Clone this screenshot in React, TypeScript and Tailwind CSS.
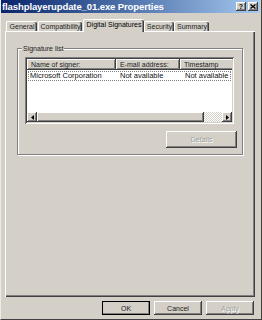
import type { ReactNode } from "react";

const raised =
  "bg-[#d4d0c8] shadow-[inset_-1px_-1px_#404040,inset_1px_1px_#ffffff,inset_-2px_-2px_#808080]";

interface TabProps {
  label: string;
  width: string;
  active?: boolean;
}

function Tab({ label, width, active = false }: TabProps) {
  if (active) {
    return (
      <div
        className={`${width} relative z-10 -mb-[1px] ml-[1px] flex h-[13px] items-start justify-center rounded-t-[2px] border-l border-t border-white bg-[#d4d0c8] pt-[1px] shadow-[inset_-1px_0_#404040,inset_-2px_0_#808080] text-black`}
      >
        {label}
      </div>
    );
  }
  return (
    <div
      className={`${width} flex h-[10px] items-center justify-center rounded-t-[2px] border-l border-t border-white bg-[#d4d0c8] shadow-[inset_-1px_0_#404040,inset_-2px_0_#808080] text-[#222]`}
    >
      {label}
    </div>
  );
}

function HeaderCell({ width, children }: { width: string; children: ReactNode }) {
  return (
    <div className={`${width} ${raised} flex h-[11px] shrink-0 items-center pl-[4px]`}>
      {children}
    </div>
  );
}

function Button({
  children,
  disabled = false,
  isDefault = false,
  className = "",
}: {
  children: ReactNode;
  disabled?: boolean;
  isDefault?: boolean;
  className?: string;
}) {
  return (
    <button
      className={`${className} ${raised} flex items-center justify-center ${
        isDefault ? "outline outline-1 -outline-offset-1 outline-black" : ""
      } ${disabled ? "text-[#a0a0a0] [text-shadow:1px_1px_#ffffff]" : "text-[#222]"}`}
    >
      {children}
    </button>
  );
}

export default function App() {
  return (
    <div className="h-[320px] w-[262px] overflow-hidden bg-[#d4d0c8] font-['Liberation_Sans',Arial,sans-serif] text-[7px] leading-none">
      <div className="flex h-[320px] w-[262px] flex-col border-b border-l border-r border-b-[#404040] border-l-[#ececec] border-r-[#404040]">
        {/* Title bar */}
        <div className="mr-[1px] flex h-[13px] items-center justify-between bg-gradient-to-r from-[#0a246a] to-[#a6caf0] pl-[1px] pr-[2px]">
          <span className="text-[9.5px] font-bold tracking-[-0.1px] text-white">
            flashplayerupdate_01.exe Properties
          </span>
          <div className="flex gap-[2px]">
            <div className={`${raised} flex h-[9px] w-[10px] items-center justify-center text-[7px] font-bold text-black`}>
              ?
            </div>
            <div className={`${raised} flex h-[9px] w-[10px] items-center justify-center`}>
              <svg width="6" height="5" viewBox="0 0 6 5">
                <path d="M0.5 0.5 L5.5 4.5 M5.5 0.5 L0.5 4.5" stroke="#000" strokeWidth="1.3" />
              </svg>
            </div>
          </div>
        </div>

        <div className="pl-[4px]">
          {/* Tabs */}
          <div className="mt-[6px] flex items-end pl-[1px]">
            <Tab label="General" width="w-[31px]" />
            <div className="ml-[1px]">
              <Tab label="Compatibility" width="w-[44px]" />
            </div>
            <Tab label="Digital Signatures" width="w-[61px]" active />
            <Tab label="Security" width="w-[30px]" />
            <Tab label="Summary" width="w-[35px]" />
          </div>

          {/* Tab panel */}
          <div className="h-[266px] w-[250px] border-l border-t border-white pl-[11px] pt-[16px] shadow-[inset_-1px_-1px_#404040,inset_-2px_-2px_#808080]">
            {/* Group box */}
            <div className="relative h-[107px] w-[226px] border border-[#808080] pl-[7px] pt-[8px] shadow-[1px_1px_#ffffff,inset_1px_1px_#ffffff]">
              <span className="absolute -top-[4px] left-[4px] bg-[#d4d0c8] px-[1px] text-[#222]">
                Signature list
              </span>

              {/* List view */}
              <div className="flex h-[67px] w-[209px] flex-col bg-white p-[2px] shadow-[inset_1px_1px_#808080,inset_-1px_-1px_#ffffff,inset_2px_2px_#404040,inset_-2px_-2px_#d4d0c8]">
                <div className="flex overflow-hidden text-[#222]">
                  <HeaderCell width="w-[89px]">Name of signer:</HeaderCell>
                  <HeaderCell width="w-[64px]">E-mail address:</HeaderCell>
                  <HeaderCell width="w-[60px]">Timestamp</HeaderCell>
                </div>
                <div className="mx-[1px] mt-[1px] flex h-[10px] items-center overflow-hidden whitespace-nowrap border border-dotted border-[#808080] text-[7.5px] text-[#111]">
                  <span className="w-[89px] shrink-0 pl-[1px]">Microsoft Corporation</span>
                  <span className="w-[64px] shrink-0 pl-[2px]">Not available</span>
                  <span className="pl-[3px]">Not available</span>
                </div>
                <div className="flex-1" />
                {/* Horizontal scrollbar */}
                <div className="flex h-[10px]">
                  <div className={`${raised} flex w-[10px] items-center justify-center`}>
                    <svg width="3" height="5" viewBox="0 0 3 5">
                      <path d="M3 0 L0 2.5 L3 5 Z" fill="#000" />
                    </svg>
                  </div>
                  <div className={`${raised} w-[167px]`} />
                  <div className="flex-1 bg-[repeating-conic-gradient(#ffffff_0_25%,#d4d0c8_0_50%)] bg-[length:2px_2px]" />
                  <div className={`${raised} flex w-[10px] items-center justify-center`}>
                    <svg width="3" height="5" viewBox="0 0 3 5">
                      <path d="M0 0 L3 2.5 L0 5 Z" fill="#000" />
                    </svg>
                  </div>
                </div>
              </div>

              <div className="flex justify-end pr-[5px] pt-[7px]">
                <Button disabled className="h-[17px] w-[71px]">
                  Details
                </Button>
              </div>
            </div>
          </div>

          {/* Dialog buttons */}
          <div className="mt-[4px] flex w-[250px] justify-end gap-[4px] pr-[1px]">
            <Button isDefault className="h-[14px] w-[48px]">
              OK
            </Button>
            <Button className="h-[14px] w-[48px]">Cancel</Button>
            <Button disabled className="h-[14px] w-[48px]">
              Apply
            </Button>
          </div>
        </div>
      </div>
    </div>
  );
}
